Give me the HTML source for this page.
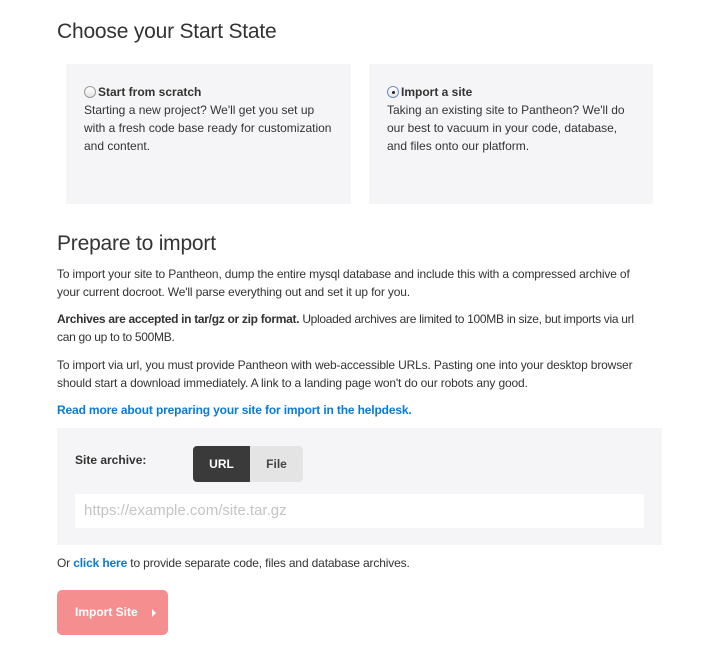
<!DOCTYPE html>
<html><head><meta charset="utf-8"><style>
*{margin:0;padding:0;box-sizing:border-box}
body{width:725px;height:662px;background:#fff;font-family:"Liberation Sans",sans-serif;color:#333;font-size:12px;position:relative;overflow:hidden}
.a{position:absolute}
h1{position:absolute;font-weight:normal;font-size:21px;color:#333;left:57px;letter-spacing:-0.2px}
.card{position:absolute;top:64px;height:140px;background:#f5f5f7;padding:19px 18px;line-height:18px;font-size:12px}
.card b{font-size:12px}
.radio{display:inline-block;width:12px;height:12px;border:1px solid #999;border-radius:50%;vertical-align:-2px;background:linear-gradient(#fff,#e5e5e5);position:relative;margin-right:2px}
.radio.on{border-color:#6a8fc4}
.radio.on:after{content:"";position:absolute;left:3.5px;top:3.5px;width:3px;height:3px;border-radius:50%;background:#222}
p{position:absolute;left:57px;width:640px;line-height:18px;font-size:12px;letter-spacing:-0.15px;white-space:nowrap}
a{color:#0a7ad6;font-weight:bold;text-decoration:none}
</style></head><body>
<h1 style="top:20px">Choose your Start State</h1>
<div class="card" style="left:66px;width:285px"><span class="radio"></span><b>Start from scratch</b><br>Starting a new project? We'll get you set up with a fresh code base ready for customization and content.</div>
<div class="card" style="left:369px;width:284px"><span class="radio on"></span><b>Import a site</b><br>Taking an existing site to Pantheon? We'll do our best to vacuum in your code, database, and files onto our platform.</div>
<h1 style="top:232px">Prepare to import</h1>
<p style="top:265px">To import your site to Pantheon, dump the entire mysql database and include this with a compressed archive of<br>your current docroot. We'll parse everything out and set it up for you.</p>
<p style="top:310px;letter-spacing:-0.3px"><b>Archives are accepted in tar/gz or zip format.</b> Uploaded archives are limited to 100MB in size, but imports via url<br>can go up to to 500MB.</p>
<p style="top:356px">To import via url, you must provide Pantheon with web-accessible URLs. Pasting one into your desktop browser<br>should start a download immediately. A link to a landing page won't do our robots any good.</p>
<p style="top:401px"><a>Read more about preparing your site for import in the helpdesk.</a></p>
<div class="a" style="left:57px;top:428px;width:605px;height:117px;background:#f5f5f7"></div>
<div class="a" style="left:75px;top:453px;font-weight:bold;font-size:12px">Site archive:</div>
<div class="a" style="left:193px;top:446px;width:57px;height:36px;background:#3a3a3a;border-radius:4px 0 0 4px;color:#fff;font-weight:bold;text-align:center;line-height:36px">URL</div>
<div class="a" style="left:250px;top:446px;width:53px;height:36px;background:#e4e4e4;border-radius:0 4px 4px 0;color:#444;font-weight:bold;text-align:center;line-height:36px">File</div>
<div class="a" style="left:75px;top:494px;width:569px;height:34px;background:#fff;color:#c4c4c4;font-size:15px;line-height:34px;padding-left:9px">https://example.com/site.tar.gz</div>
<p style="top:554px">Or <a>click here</a> to provide separate code, files and database archives.</p>
<div class="a" style="left:57px;top:590px;width:111px;height:45px;background:#f58e8e;border-radius:5px;color:#fff;font-weight:bold;font-size:12px;line-height:45px;padding-left:18px">Import Site<span style="position:absolute;left:95px;top:19px;border-left:4px solid #fff;border-top:4px solid transparent;border-bottom:4px solid transparent"></span></div>
</body></html>
